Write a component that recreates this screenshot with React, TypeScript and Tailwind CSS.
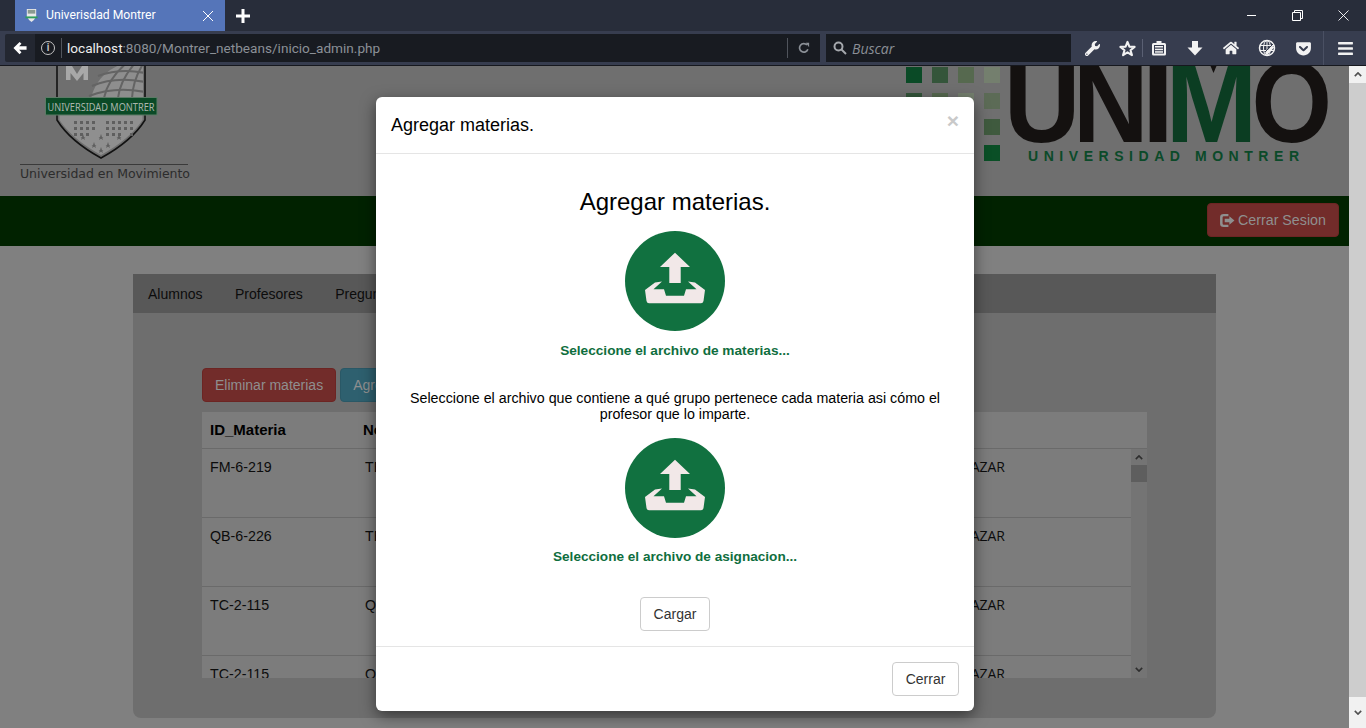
import React from 'react';
import { FaBars, FaGetPocket, FaHome, FaWrench } from 'react-icons/fa';

const rows = [
  { id: 'FM-6-219', name: 'TEMAS DE FISICA', teacher: 'JUAN PEREZ SALAZAR' },
  { id: 'QB-6-226', name: 'TEMAS DE QUIMICA', teacher: 'JUAN PEREZ SALAZAR' },
  { id: 'TC-2-115', name: 'QUIMICA II', teacher: 'JUAN PEREZ SALAZAR' },
  { id: 'TC-2-115', name: 'QUIMICA II', teacher: 'JUAN PEREZ SALAZAR' },
];

const UploadCircle = () => (
  <svg viewBox="0 0 100 100" className="w-[100px] h-[100px] block">
    <circle cx="50" cy="50" r="50" fill="#117140" />
    <path d="M50 21.7 L65 36 L55.7 36 L55.7 52 L44.3 52 L44.3 36 L35 36 Z" fill="#f2e8e8" />
    <path
      d="M20 59 L30 51.5 L37 50.5 L28.5 58.3 L39 58.3 L41 64.7 L59 64.7 L61 58.3 L71.5 58.3 L63 50.5 L70 51.5 L80 59 L78.5 70 Q78 72.3 76 72.3 L24 72.3 Q22 72.3 21.5 70 Z"
      fill="#f2e8e8"
    />
  </svg>
);

const ShieldLogo = () => (
  <svg viewBox="18 66 175 130" className="w-[175px] h-[130px] block">
    <defs>
      <clipPath id="shieldTop">
        <rect x="59" y="60" width="84" height="38" />
      </clipPath>
    </defs>
    <path d="M57 60 L145 60 L145 120 Q132 141 101 158 Q70 141 57 120 Z" fill="#6f6f6f" stroke="#121212" strokeWidth="1.6" />
    <path d="M59.5 115 L142.5 115 L142.5 120 Q130 139 101 155 Q72 139 59.5 120 Z" fill="#8f8f8f" />
    <path d="M66 80 L66 66 L72 66 L77 74 L82 66 L88 66 L88 80 L83.5 80 L83.5 73 L77 81 L70.5 73 L70.5 80 Z" fill="#a8a8a8" />
    <g clipPath="url(#shieldTop)">
      <circle cx="136" cy="108" r="46" fill="#8e8e8e" />
      <g fill="none" stroke="#646464" strokeWidth="2">
        <path d="M104 98 Q108 78 128 62" />
        <path d="M118 98 Q120 80 136 62" />
        <path d="M132 98 Q133 80 143 64" />
        <path d="M92 86 Q115 76 145 82" />
        <path d="M98 76 Q120 68 145 73" />
        <path d="M89 96 Q115 86 145 92" />
      </g>
    </g>
    <g fill="#5f5f5f">
      {[121, 127, 133].map((y, r) =>
        [74, 80, 86, 92, 106, 112, 118, 124, 130].map((x) =>
          r === 2 && (x === 92 || x === 124) ? null : <rect key={`${x}-${y}`} x={x} y={y} width="3" height="3" />,
        ),
      )}
      <path d="M83 134 L85 140 L80.5 137 L85.5 137 L81 140 Z" />
      <path d="M101 134 L103 140 L98.5 137 L103.5 137 L99 140 Z" />
      <path d="M119 134 L121 140 L116.5 137 L121.5 137 L117 140 Z" />
      <path d="M94 142 L96 148 L91.5 145 L96.5 145 L92 148 Z" />
      <path d="M108 142 L110 148 L105.5 145 L110.5 145 L106 148 Z" />
      <path d="M101 147 L103 153 L98.5 150 L103.5 150 L99 153 Z" />
    </g>
    <rect x="45.5" y="97.5" width="111.5" height="17.5" fill="#0a4a26" stroke="#5c7a66" strokeWidth="1" />
    <text x="47.5" y="111" fontFamily="'Noto Sans', sans-serif" fontSize="11.5" fill="#a9b5ad" textLength="107" lengthAdjust="spacingAndGlyphs">
      UNIVERSIDAD MONTRER
    </text>
    <rect x="20" y="164" width="168" height="1" fill="#3a3a3a" />
    <text x="20" y="178" fontFamily="'DejaVu Sans', sans-serif" fontSize="12.5" fill="#2c2c2c" textLength="170">
      Universidad en Movimiento
    </text>
  </svg>
);

const squares = [
  { x: 906, y: 67, c: '#0a4a26' },
  { x: 932, y: 67, c: '#34553a' },
  { x: 958, y: 67, c: '#56694f' },
  { x: 984, y: 67, c: '#747f6e' },
  { x: 906, y: 93, c: '#34553a' },
  { x: 932, y: 93, c: '#56694f' },
  { x: 958, y: 93, c: '#747f6e' },
  { x: 984, y: 93, c: '#5c6b56' },
  { x: 984, y: 119, c: '#3f5a3e' },
  { x: 984, y: 145, c: '#0a4f26' },
];

// ink of each bold glyph stretched onto the logo's letter boxes
const bigLetters = [
  { t: 'U', x: 1004, sx: 0.92, c: '#141110' },
  { t: 'N', x: 1073, sx: 0.91, c: '#141110' },
  { t: 'I', x: 1142, sx: 1.0, c: '#141110' },
  { t: 'M', x: 1165.5, sx: 0.96, c: '#0b3d22' },
  { t: 'O', x: 1251.5, sx: 0.9, c: '#141110' },
];

const UnimoLogo = () => (
  <svg viewBox="905 66 425 130" className="w-[425px] h-[130px] block">
    {squares.map((s) => (
      <rect key={`${s.x}-${s.y}`} x={s.x} y={s.y} width="16" height="16" fill={s.c} />
    ))}
    {bigLetters.map((l) => (
      <text
        key={l.t}
        transform={`translate(${l.x} 142) scale(${l.sx} 1)`}
        fontFamily="'Liberation Sans', sans-serif"
        fontWeight="700"
        fontSize="115"
        fill={l.c}
      >
        {l.t}
      </text>
    ))}
    <path d="M1210.5 66 L1216.5 66 L1213.5 73 Z" fill="#141110" />
    <text x="1028" y="161" fontFamily="'Liberation Sans', sans-serif" fontWeight="700" fontSize="14" fill="#0b4a29" textLength="271">
      UNIVERSIDAD MONTRER
    </text>
  </svg>
);

const Favicon = () => (
  <svg viewBox="0 0 16 16" className="w-[15px] h-[15px] block">
    <path d="M3 1 L13 1 L13 9 Q11 13 8 15 Q5 13 3 9 Z" fill="#e8e8e8" />
    <path d="M4 2 L12 2 L12 6 L4 6 Z" fill="#8a9a90" />
    <rect x="1.5" y="9" width="13" height="2" fill="#2f9e5b" />
  </svg>
);

const ReadingList = () => (
  <svg viewBox="0 0 16 16" className="w-4 h-4 block" fill="#f2f2f2">
    <path d="M5.5 1 L10.5 1 L10.5 3 L13.5 3 Q15 3 15 4.5 L15 14 Q15 15.5 13.5 15.5 L2.5 15.5 Q1 15.5 1 14 L1 4.5 Q1 3 2.5 3 L5.5 3 Z M3 5 L3 13.5 L13 13.5 L13 5 Z" fillRule="evenodd" />
    <rect x="4" y="6" width="8" height="1.5" />
    <rect x="4" y="8.7" width="8" height="1.5" />
    <rect x="4" y="11.2" width="8" height="1.5" />
  </svg>
);

const ThickStar = () => (
  <svg viewBox="0 0 18 18" className="w-[17px] h-[17px] block" fill="none" stroke="#f2f2f2" strokeWidth="2.2" strokeLinejoin="round">
    <path d="M9 2 L11 7 L16.5 7.3 L12.2 10.8 L13.7 16 L9 13.1 L4.3 16 L5.8 10.8 L1.5 7.3 L7 7 Z" />
  </svg>
);

const DownArrow = () => (
  <svg viewBox="0 0 16 16" className="w-4 h-4 block" fill="#f2f2f2">
    <path d="M5 1 H11 V7.5 H15.5 L8 15.5 L0.5 7.5 H5 Z" />
  </svg>
);

const GlobePen = () => (
  <svg viewBox="0 0 18 18" className="w-[18px] h-[18px] block" fill="none" stroke="#f2f2f2" strokeWidth="1">
    <circle cx="9" cy="9" r="7.5" strokeWidth="1.5" />
    <ellipse cx="9" cy="9" rx="3.5" ry="7.5" />
    <path d="M2 6.5 L16 6.5 M2 11.5 L16 11.5 M9 1.5 L9 16.5" />
    <path d="M8 15 L15 7.5" stroke="#f2f2f2" strokeWidth="3" />
    <path d="M7 13 L15 5" stroke="#373d4f" strokeWidth="1" />
  </svg>
);

const BackArrow = () => (
  <svg viewBox="0 0 16 16" className="w-[14px] h-[14px] block" fill="#ffffff">
    <path d="M7.5 1 L0.5 8 L7.5 15 L9.7 12.8 L7 10 L15.5 10 L15.5 6 L7 6 L9.7 3.2 Z" />
  </svg>
);

const SignOut = () => (
  <svg viewBox="0 0 16 14" className="w-[15px] h-[13px] block" fill="#8f8f8f">
    <path d="M5 0 L9 0 L9 2.5 L4 2.5 Q2.7 2.5 2.7 3.8 L2.7 10.2 Q2.7 11.5 4 11.5 L9 11.5 L9 14 L4 14 Q0 14 0 10.5 L0 3.5 Q0 0 4 0 Z" />
    <path d="M10 2.5 L15.5 7 L10 11.5 L10 9 L5 9 L5 5 L10 5 Z" />
  </svg>
);

const BrowserChrome = () => (
  <div className="shrink-0 font-['Roboto',sans-serif]">
    <div className="h-[31px] bg-[#282d3a] flex items-stretch pl-[15px]">
      <div className="w-[210px] bg-[#5575b9] flex items-center pl-[9px] pr-[11px]">
        <Favicon />
        <span className="ml-[7px] text-[12.2px] text-white flex-1">Univerisdad Montrer</span>
        <svg viewBox="0 0 12 12" className="w-[12px] h-[12px]" stroke="#ffffff" strokeWidth="1">
          <path d="M1 1 L11 11 M11 1 L1 11" />
        </svg>
      </div>
      <div className="w-[36px] flex items-center justify-center">
        <svg viewBox="0 0 14 14" className="w-[14px] h-[14px]" fill="#ffffff">
          <path d="M5.5 0 H8.5 V5.5 H14 V8.5 H8.5 V14 H5.5 V8.5 H0 V5.5 H5.5 Z" />
        </svg>
      </div>
      <div className="flex-1" />
      <div className="flex items-center">
        <div className="w-[46px] flex justify-center">
          <div className="w-[9px] h-px bg-white" />
        </div>
        <div className="w-[46px] flex justify-center">
          <svg viewBox="0 0 11 11" className="w-[11px] h-[11px]" fill="none" stroke="#ffffff">
            <path d="M0.5 2.5 H8.5 V10.5 H0.5 Z M2.5 2.5 V0.5 H10.5 V8.5 H8.5" />
          </svg>
        </div>
        <div className="w-[46px] flex justify-center">
          <svg viewBox="0 0 11 11" className="w-[11px] h-[11px]" stroke="#ffffff" strokeWidth="0.9">
            <path d="M0.5 0.5 L10.5 10.5 M10.5 0.5 L0.5 10.5" />
          </svg>
        </div>
      </div>
    </div>
    <div className="h-[35px] bg-[#373d4f] border-b border-[#16181e] flex items-center pl-[5px]">
      <div className="w-[30px] h-[28px] bg-[#232731] rounded-l-[2px] flex items-center justify-center">
        <BackArrow />
      </div>
      <div className="w-[785px] h-[28px] bg-[#181b21] flex items-center">
        <div className="w-[14px] h-[14px] ml-[6px] rounded-full border border-[#c4c4c4] flex items-center justify-center text-[10px] leading-none text-[#c4c4c4] font-bold">
          i
        </div>
        <div className="w-px h-[20px] bg-[#50545c] ml-[6px]" />
        <div className="ml-[5px] text-[13.6px] flex-1 whitespace-nowrap text-[#8b9097]">
          <span className="text-[#eeeeee]">localhost</span>:8080/Montrer_netbeans/inicio_admin.php
        </div>
        <div className="w-px h-[20px] bg-[#50545c]" />
        <div className="w-[32px] flex justify-center">
          <svg viewBox="0 0 14 14" className="w-[12px] h-[12px]" fill="none" stroke="#8b9097" strokeWidth="2">
            <path d="M11.5 8.5 A5 5 0 1 1 10.5 3.5" />
            <path d="M9 1 L13 1 L13 6 Z" fill="#8b9097" stroke="none" />
          </svg>
        </div>
      </div>
      <div className="w-[245px] h-[28px] ml-[6px] bg-[#181b21] flex items-center pl-[7px]">
        <svg viewBox="0 0 14 14" className="w-[14px] h-[14px]" fill="none" stroke="#a5a8ad" strokeWidth="2">
          <circle cx="5.5" cy="5.5" r="4" />
          <path d="M8.5 8.5 L13 13" />
        </svg>
        <span className="ml-[5px] text-[14px] italic text-[#8b8f96] font-['Open_Sans',sans-serif]">Buscar</span>
      </div>
      <div className="flex-1 flex items-center text-[#f2f2f2] h-full">
        <div className="w-[29px] flex justify-end"><FaWrench className="w-[15px] h-[15px]" /></div>
        <div className="w-[36px] flex justify-end"><ThickStar /></div>
        <div className="w-px h-[18px] bg-[#5a6073] ml-[6px]" />
        <div className="w-[24px] flex justify-end"><ReadingList /></div>
        <div className="w-[36px] flex justify-end"><DownArrow /></div>
        <div className="w-[36px] flex justify-end"><FaHome className="w-[16px] h-[16px]" /></div>
        <div className="w-[37px] flex justify-end"><GlobePen /></div>
        <div className="w-[36px] flex justify-end"><FaGetPocket className="w-[17px] h-[17px]" /></div>
        <div className="w-px h-full bg-[#4a5063] ml-[11px]" />
        <div className="flex-1 flex justify-center"><FaBars className="w-[17px] h-[17px]" /></div>
      </div>
    </div>
  </div>
);

const PageBehind = () => (
  <div className="flex-1 min-w-0 overflow-hidden bg-[#808080]">
    <div className="h-[130px] bg-[#6f6f6f] flex justify-between pl-[18px] pr-[19px]">
      <ShieldLogo />
      <UnimoLogo />
    </div>
    <div className="h-[50px] bg-[#012200] flex items-center justify-end pr-[10px] pb-[2px]">
      <div className="h-[34px] w-[132px] justify-center pt-[1px] rounded-[4px] bg-[#722c2a] border border-[#6c2523] flex items-center gap-[3px] text-[14.25px] text-[#8f8f8f]">
        <SignOut />
        Cerrar Sesion
      </div>
    </div>
    <div className="pt-[28px] px-[133px]">
      <div className="rounded-b-[8px] bg-[#6e6e6e] pb-[40px]">
        <div className="h-[39px] bg-[#585858] flex items-center pt-[1px] px-[15px] gap-[32.5px] text-[14px] text-[#0c0c0c]">
          <span>Alumnos</span>
          <span>Profesores</span>
          <span>Preguntas</span>
          <span>Materias</span>
        </div>
        <div className="px-[69px] pt-[55px]">
          <div className="flex gap-[4px]">
            <div className="h-[34px] px-[12px] rounded-[4px] bg-[#722c2a] border border-[#6c2523] flex items-center text-[14px] text-[#8f8f8f]">
              Eliminar materias
            </div>
            <div className="h-[34px] px-[12px] rounded-[4px] bg-[#2e606f] border border-[#2a5866] flex items-center text-[14px] text-[#8f8f8f]">
              Agregar materias
            </div>
          </div>
          <div className="mt-[10px] bg-[#7c7c7c]">
            <div className="h-[37px] border-b border-[#6a6a6a] flex items-center pl-[8px] text-[15px] font-bold text-black">
              <span className="w-[153px]">ID_Materia</span>
              <span>Nombre</span>
            </div>
            <div className="flex h-[229px]">
              <div className="flex-1 overflow-hidden">
                {rows.map((r, i) => (
                  <div key={i} className="h-[69px] border-b border-[#6a6a6a] pl-[8px] pr-[126px] pt-[8px] flex text-[14.25px] text-[#0c0c0c]">
                    <span className="w-[155px]">{r.id}</span>
                    <span className="flex-1">{r.name}</span>
                    <span className="font-['Open_Sans',sans-serif] text-[14px] -mt-[1px]">{r.teacher}</span>
                  </div>
                ))}
              </div>
              <div className="w-[16px] bg-[#747474] flex flex-col items-center text-[#2e2e2e]">
                <svg viewBox="0 0 10 6" className="w-[8px] h-[5px] mt-[6px]" fill="none" stroke="currentColor" strokeWidth="2">
                  <path d="M1 5 L5 1 L9 5" />
                </svg>
                <div className="w-full h-[17px] mt-[5px] bg-[#5e5e5e]" />
                <div className="flex-1" />
                <svg viewBox="0 0 10 6" className="w-[8px] h-[5px] mb-[6px]" fill="none" stroke="currentColor" strokeWidth="2">
                  <path d="M1 1 L5 5 L9 1" />
                </svg>
              </div>
            </div>
          </div>
        </div>
      </div>
    </div>
  </div>
);

const PageScrollbar = () => (
  <div className="w-[17px] shrink-0 bg-[#f1f1f1] flex flex-col items-center text-[#505050]">
    <div className="h-[17px] flex items-center">
      <svg viewBox="0 0 10 6" className="w-[8px] h-[5px]" fill="none" stroke="currentColor" strokeWidth="2">
        <path d="M1 5 L5 1 L9 5" />
      </svg>
    </div>
    <div className="w-full flex-1 bg-[#cdcdcd]" />
    <div className="h-[31px] flex items-center">
      <svg viewBox="0 0 10 6" className="w-[8px] h-[5px]" fill="none" stroke="currentColor" strokeWidth="2">
        <path d="M1 1 L5 5 L9 1" />
      </svg>
    </div>
  </div>
);

const Modal = () => (
  <div className="absolute left-[376px] top-[97px] w-[598px] h-[614px] bg-white rounded-[6px] shadow-[0_5px_15px_rgba(0,0,0,0.5)] flex flex-col text-black">
    <div className="h-[57px] shrink-0 border-b border-[#e5e5e5] flex items-center justify-between pl-[15px] pr-[15px]">
      <span className="text-[18px]">Agregar materias.</span>
      <span className="text-[21px] font-bold leading-none text-[#c9c9c9] -mt-[10px]">×</span>
    </div>
    <div className="flex-1 flex flex-col items-center px-[15px]">
      <h2 className="mt-[35px] text-[24px] leading-[26px]">Agregar materias.</h2>
      <div className="mt-[16px]"><UploadCircle /></div>
      <div className="mt-[12px] text-[13.65px] leading-[15px] font-bold text-[#0f6e3e]">Seleccione el archivo de materias...</div>
      <p className="mt-[32px] text-[14.25px] leading-[16px] text-center">
        Seleccione el archivo que contiene a qué grupo pertenece cada materia asi cómo el profesor que lo imparte.
      </p>
      <div className="mt-[16px]"><UploadCircle /></div>
      <div className="mt-[11px] text-[13.6px] leading-[15px] font-bold text-[#0f6e3e]">Seleccione el archivo de asignacion...</div>
      <div className="mt-[33px] h-[34px] w-[70px] rounded-[4px] border border-[#cccccc] flex items-center justify-center text-[14px] text-[#333333]">
        Cargar
      </div>
    </div>
    <div className="h-[65px] shrink-0 border-t border-[#e5e5e5] flex items-start justify-end pt-[15px] pr-[15px]">
      <div className="h-[34px] w-[67px] rounded-[4px] border border-[#cccccc] flex items-center justify-center text-[14px] text-[#333333]">
        Cerrar
      </div>
    </div>
  </div>
);

const App: React.FC = () => (
  <div className="relative w-[1366px] h-[728px] overflow-hidden flex flex-col font-['Liberation_Sans',Arial,sans-serif]">
    <BrowserChrome />
    <div className="flex flex-1 min-h-0">
      <PageBehind />
      <PageScrollbar />
    </div>
    <Modal />
  </div>
);

export default App;
